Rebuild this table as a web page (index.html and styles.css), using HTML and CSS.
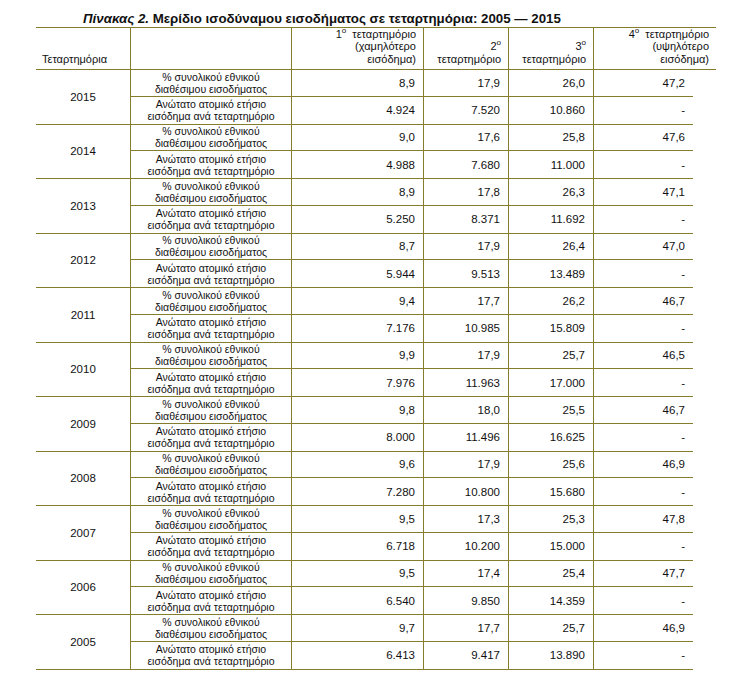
FILE: index.html
```html
<!DOCTYPE html>
<html lang="el">
<head>
<meta charset="utf-8">
<title>Πίνακας 2</title>
<link rel="stylesheet" href="styles.css">
</head>
<body>
<div class="page">
  <h1 class="title"><em>Πίνακας 2.</em> Μερίδιο ισοδύναμου εισοδήματος σε τεταρτημόρια: 2005 — 2015</h1>
  <div class="grid" id="grid">
    <div class="hc h-left">Τεταρτημόρια</div>
    <div class="hc"></div>
    <div class="hc h-num"><span>1<sup>o</sup>&nbsp; τεταρτημόριο</span><span>(χαμηλότερο</span><span>εισόδημα)</span></div>
    <div class="hc h-num"><span>2<sup>o</sup></span><span>τεταρτημόριο</span></div>
    <div class="hc h-num"><span>3<sup>o</sup></span><span>τεταρτημόριο</span></div>
    <div class="hc h-num h-last"><span>4<sup>o</sup>&nbsp; τεταρτημόριο</span><span>(υψηλότερο</span><span>εισόδημα)</span></div>
  </div>
</div>
<script src="app.js"></script>
</body>
</html>
```

FILE: app.js
```js
const data = [
  ["2015", ["8,9","17,9","26,0","47,2"], ["4.924","7.520","10.860","-"]],
  ["2014", ["9,0","17,6","25,8","47,6"], ["4.988","7.680","11.000","-"]],
  ["2013", ["8,9","17,8","26,3","47,1"], ["5.250","8.371","11.692","-"]],
  ["2012", ["8,7","17,9","26,4","47,0"], ["5.944","9.513","13.489","-"]],
  ["2011", ["9,4","17,7","26,2","46,7"], ["7.176","10.985","15.809","-"]],
  ["2010", ["9,9","17,9","25,7","46,5"], ["7.976","11.963","17.000","-"]],
  ["2009", ["9,8","18,0","25,5","46,7"], ["8.000","11.496","16.625","-"]],
  ["2008", ["9,6","17,9","25,6","46,9"], ["7.280","10.800","15.680","-"]],
  ["2007", ["9,5","17,3","25,3","47,8"], ["6.718","10.200","15.000","-"]],
  ["2006", ["9,5","17,4","25,4","47,7"], ["6.540","9.850","14.359","-"]],
  ["2005", ["9,7","17,7","25,7","46,9"], ["6.413","9.417","13.890","-"]]
];
const grid = document.getElementById("grid");
let html = "";
const nums = (vals, cls) => vals.map((v, i) =>
  '<div class="num ' + cls + (i === 3 ? ' num-last' : '') + '">' + v + '</div>').join("");
for (const [year, a, b] of data) {
  html += '<div class="year">' + year + '</div>' +
    '<div class="lbl ra">% συνολικού εθνικού<br>διαθέσιμου εισοδήματος</div>' +
    nums(a, "ra") + '<div class="gap"></div>' +
    '<div class="lbl rb">Ανώτατο ατομικό ετήσιο<br>εισόδημα ανά τεταρτημόριο</div>' +
    nums(b, "rb") + '<div class="gap"></div>';
}
grid.insertAdjacentHTML("beforeend", html);
```

FILE: styles.css
```css
html, body {
  margin: 0;
  padding: 0;
  background: #fff;
}
body {
  font-family: "Liberation Sans", Arial, sans-serif;
  color: #111;
}
.page {
  width: 731px;
  height: 684px;
  padding: 11px 0 0 36px;
  box-sizing: border-box;
}
.title {
  margin: 0 0 0 47px;
  font-size: 13.3px;
  line-height: 16px;
  font-weight: bold;
  height: 16px;
}
.title em {
  font-style: italic;
}
.grid {
  display: grid;
  width: 680px;
  grid-template-columns: 95px 161px 132px 85px 85px 99px 23px;
  grid-template-rows: 42px repeat(11, 26.5px 28px);
  border-top: 1px solid #857c2c;
  font-size: 10.5px;
}
.grid > div {
  box-sizing: border-box;
  border-bottom: 1px solid #857c2c;
  border-right: 1px solid #857c2c;
  display: flex;
}
.hc {
  flex-direction: column;
  justify-content: flex-end;
  font-size: 11px;
  line-height: 12.8px;
  padding-bottom: 3px;
}
.h-left {
  padding-left: 6px;
}
.h-num {
  align-items: flex-end;
  padding-right: 7px;
}
.grid > .h-last {
  grid-column: span 2;
  border-right: none;
}
.hc sup {
  font-size: 8px;
  line-height: 0;
  vertical-align: 5px;
}
.grid > .year {
  grid-row: span 2;
  align-items: center;
  justify-content: center;
  font-size: 11.5px;
}
.lbl {
  align-items: center;
  justify-content: center;
  text-align: center;
  line-height: 12px;
  font-size: 10.5px;
}
.num {
  align-items: center;
  justify-content: flex-end;
  padding-right: 8px;
  font-size: 11.5px;
}
.grid > .num-last {
  border-right: none;
}
.grid > .gap {
  border: none;
}
```
